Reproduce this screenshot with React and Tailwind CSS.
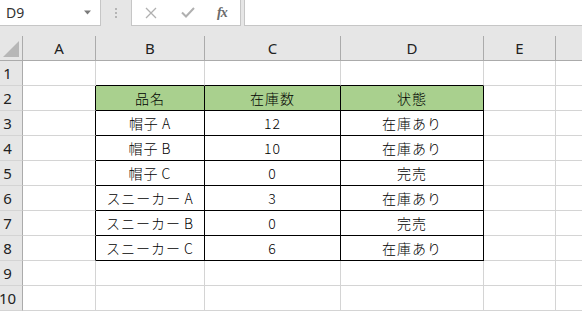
import React from 'react';

const cols = ['A', 'B', 'C', 'D', 'E', ''];

const items = [
  ['帽子', 'A', '12', '在庫あり'],
  ['帽子', 'B', '10', '在庫あり'],
  ['帽子', 'C', '0', '完売'],
  ['スニーカー', 'A', '3', '在庫あり'],
  ['スニーカー', 'B', '0', '完売'],
  ['スニーカー', 'C', '6', '在庫あり'],
];

const jp = { fontFamily: '"Noto Sans CJK JP", sans-serif' };
const ui = { fontFamily: '"Noto Sans", "Liberation Sans", sans-serif' };

function Cell({ children, black, blackBottom, green, className = '' }) {
  return (
    <div
      className={`h-[25px] flex items-center justify-center border-r border-b text-[14px] font-light tracking-[1px] text-black ${
        black ? 'border-r-black' : 'border-r-[#d4d4d4]'
      } ${blackBottom ? 'border-b-black' : 'border-b-[#d4d4d4]'} ${green ? 'bg-[#a9d08e]' : 'bg-white'} ${className}`}
      style={jp}
    >
      {children}
    </div>
  );
}

function RowHead({ n }) {
  return (
    <div
      className="h-[25px] flex items-center pr-[7px] justify-center bg-[#e6e6e6] border-r border-b border-r-[#ababab] border-b-[#d4d4d4] text-[15px] text-[#222]"
      style={ui}
    >
      {n}
    </div>
  );
}

export default function App() {
  const rows = [];
  for (let r = 1; r <= 10; r++) {
    const inTable = r >= 2 && r <= 8;
    let vals = ['', '', ''];
    if (r === 2) vals = ['品名', '在庫数', '状態'];
    if (r >= 3 && r <= 8) {
      const it = items[r - 3];
      vals = [
        <>
          {it[0]}
          <span className="ml-[3px]">{it[1]}</span>
        </>,
        it[2],
        it[3],
      ];
    }
    rows.push(
      <React.Fragment key={r}>
        <RowHead n={r} />
        <Cell black={inTable} />
        {vals.map((v, i) => (
          <Cell key={i} black={inTable} blackBottom={r <= 8} green={r === 2}>
            {v}
          </Cell>
        ))}
        <Cell />
        <Cell className="border-r-0" />
      </React.Fragment>
    );
  }

  return (
    <div className="w-[582px] h-[311px] overflow-hidden bg-[#e6e6e6] select-none">
      {/* formula bar */}
      <div className="h-[26px] flex">
        <div className="w-[101px] h-[26px] bg-white border-r border-b border-[#c6c6c6] flex items-center justify-between pl-[6px] pr-[8px]">
          <span className="text-[14px] text-[#333]" style={ui}>D9</span>
          <svg width="8" height="5" viewBox="0 0 8 5">
            <path d="M0 0.5h7l-3.5 4z" fill="#7a7a7a" />
          </svg>
        </div>
        <div className="w-[30px] flex flex-col items-center justify-center gap-[2px] pr-[1px]">
          <span className="w-[2px] h-[2px] bg-[#b5b5b5]" />
          <span className="w-[2px] h-[2px] bg-[#b5b5b5]" />
          <span className="w-[2px] h-[2px] bg-[#b5b5b5]" />
        </div>
        <div className="w-[110px] h-[26px] bg-white border-x border-b border-[#c6c6c6] flex items-center">
          <svg width="12" height="12" viewBox="0 0 12 12" className="ml-[13px]">
            <path d="M1 1L11 11M11 1L1 11" stroke="#b0b0b0" strokeWidth="1.3" />
          </svg>
          <svg width="14" height="11" viewBox="0 0 14 11" className="ml-[24px]">
            <path d="M1 5.5L5 9.5L13 1" stroke="#b0b0b0" strokeWidth="2" fill="none" />
          </svg>
          <span
            className="ml-[22px] text-[14px] italic font-bold text-[#6b6b6b] tracking-[-1px]"
            style={{ fontFamily: '"Liberation Serif", serif' }}
          >
            fx
          </span>
        </div>
        <div className="w-[3px]" />
        <div className="flex-1 h-[26px] bg-white border-l border-b border-[#c6c6c6]" />
      </div>
      <div className="h-[10px]" />
      {/* sheet */}
      <div className="grid grid-cols-[23px_73px_109px_136px_143px_72px_1fr]">
        <div className="h-[25px] bg-[#e6e6e6] border-r border-b border-[#ababab] relative">
          <svg width="22" height="24" viewBox="0 0 22 24" className="absolute left-0 top-0">
            <path d="M3 21L19 5V21z" fill="#b7b7b7" />
          </svg>
        </div>
        {cols.map((c, i) => (
          <div
            key={i}
            className={`h-[25px] flex items-center justify-center bg-[#e6e6e6] border-b border-b-[#ababab] text-[15px] text-[#222] ${
              i < 5 ? 'border-r border-r-[#ababab]' : ''
            }`}
            style={ui}
          >
            {c}
          </div>
        ))}
        {rows}
      </div>
    </div>
  );
}
